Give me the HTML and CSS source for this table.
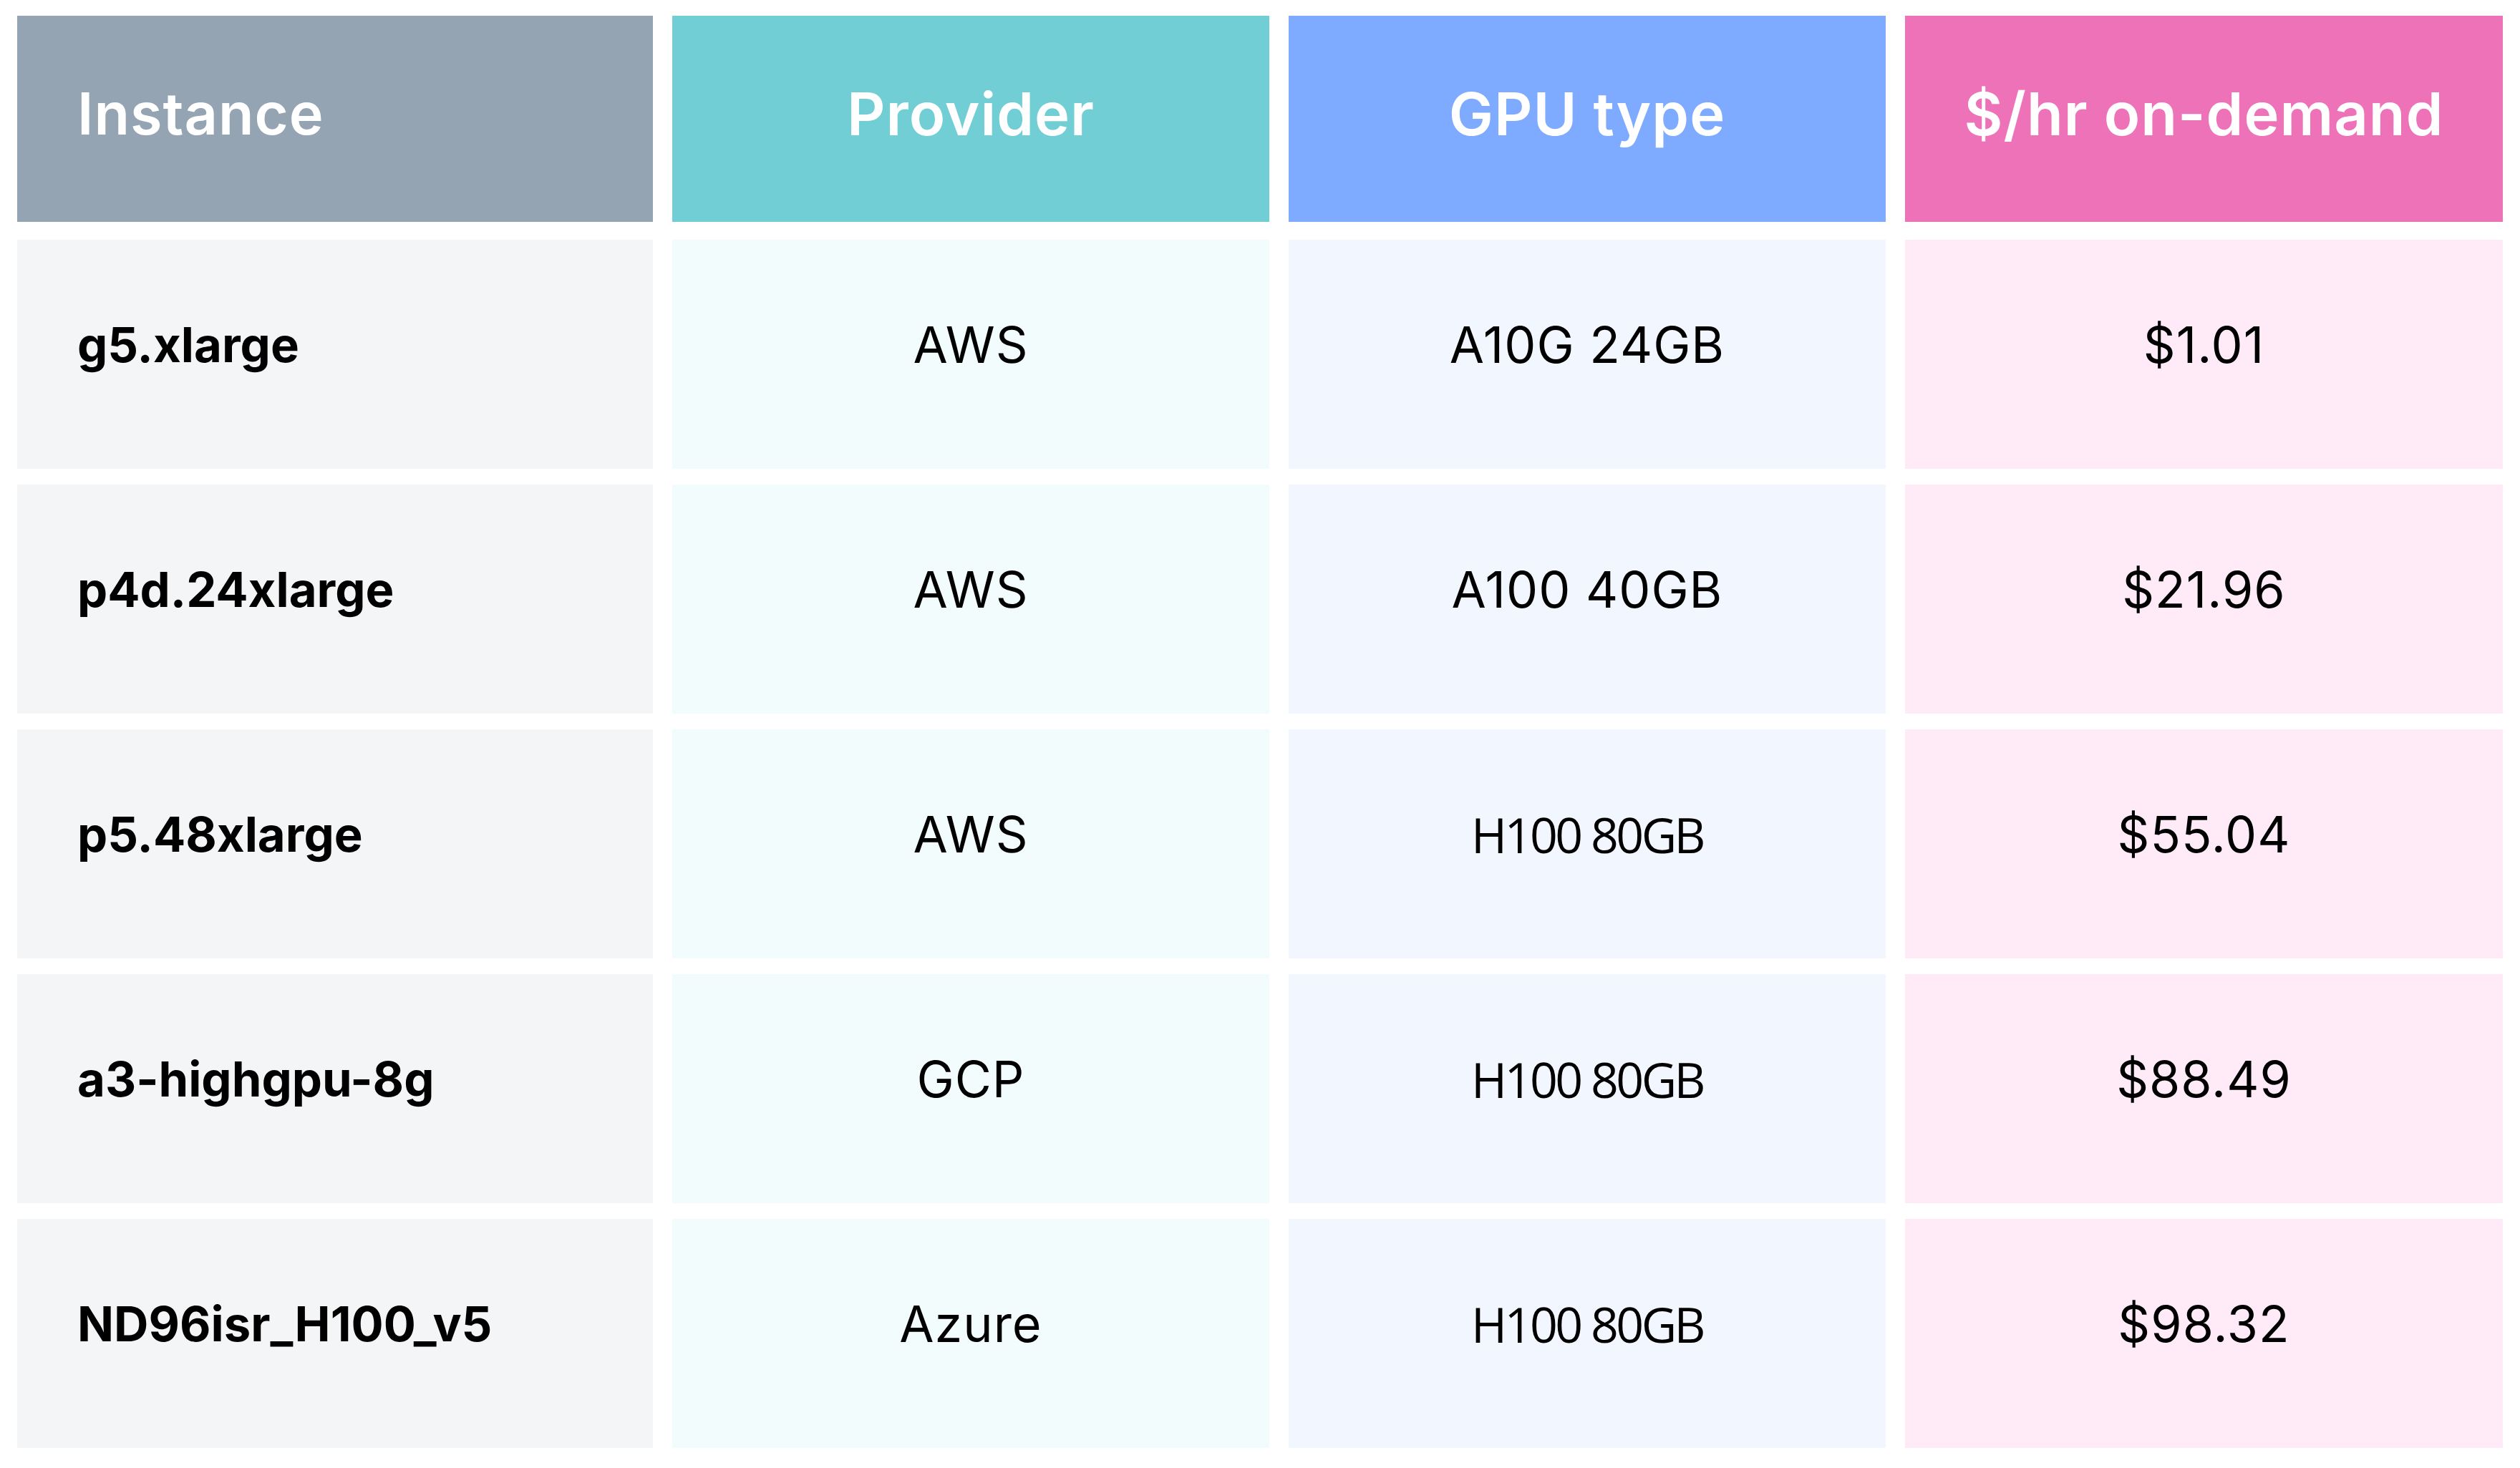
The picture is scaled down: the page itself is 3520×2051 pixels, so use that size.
FILE: index.html
```html
<!DOCTYPE html>
<html lang="en">
<head>
<meta charset="utf-8">
<title>GPU instance pricing</title>
<link rel="stylesheet" href="styles.css">
</head>
<body>
<div class="table" role="table">
  <div class="cell head c1">Instance</div>
  <div class="cell head c2">Provider</div>
  <div class="cell head c3">GPU type</div>
  <div class="cell head c4">$/hr on-demand</div>

  <div class="cell c1 name">g5.xlarge</div>
  <div class="cell c2">AWS</div>
  <div class="cell c3">A10G 24GB</div>
  <div class="cell c4">$1.01</div>

  <div class="cell c1 name">p4d.24xlarge</div>
  <div class="cell c2">AWS</div>
  <div class="cell c3">A100 40GB</div>
  <div class="cell c4">$21.96</div>

  <div class="cell c1 name">p5.48xlarge</div>
  <div class="cell c2">AWS</div>
  <div class="cell c3 alt">H100 80GB</div>
  <div class="cell c4">$55.04</div>

  <div class="cell c1 name">a3-highgpu-8g</div>
  <div class="cell c2">GCP</div>
  <div class="cell c3 alt">H100 80GB</div>
  <div class="cell c4">$88.49</div>

  <div class="cell c1 name">ND96isr_H100_v5</div>
  <div class="cell c2">Azure</div>
  <div class="cell c3 alt">H100 80GB</div>
  <div class="cell c4">$98.32</div>
</div>
</body>
</html>
```
FILE: styles.css
```css
html, body {
  margin: 0;
  padding: 0;
  background: #ffffff;
}

body {
  padding: 22px 0 0 24px;
  font-family: Inter, "Noto Sans", "Liberation Sans", sans-serif;
  color: #000000;
}

.table {
  display: grid;
  grid-template-columns: 888px 834px 834px 835px;
  grid-template-rows: 291px repeat(5, 320px);
  column-gap: 27px;
  row-gap: 22px;
}

.cell {
  display: flex;
  align-items: center;
  justify-content: center;
  box-sizing: border-box;
  padding-bottom: 28px;
  font-size: 70px;
  font-weight: 400;
  letter-spacing: 1px;
  white-space: nowrap;
}

.cell.c1 {
  justify-content: flex-start;
  padding-left: 84px;
}

.head {
  color: #ffffff;
  font-size: 83px;
  font-weight: 600;
  padding-bottom: 14px;
  height: 288px;
  align-self: start;
}

.head.c1 {
  background: #94a4b3;
  font-size: 81px;
}
.head.c2 { background: #70ced4; }
.head.c3 { background: #7eaaff; }
.head.c4 {
  background: #ee72b8;
  letter-spacing: 1px;
}

.c1 { background: #f4f5f7; }
.c2 { background: #f3fcfc; }
.c3 { background: #f1f6ff; }
.c4 { background: #feebf7; }

.name {
  font-size: 67px;
  font-weight: 700;
  letter-spacing: 0;
}

.alt {
  font-family: "Open Sans", "Noto Sans", sans-serif;
  font-size: 68px;
  letter-spacing: -3.5px;
}
```
